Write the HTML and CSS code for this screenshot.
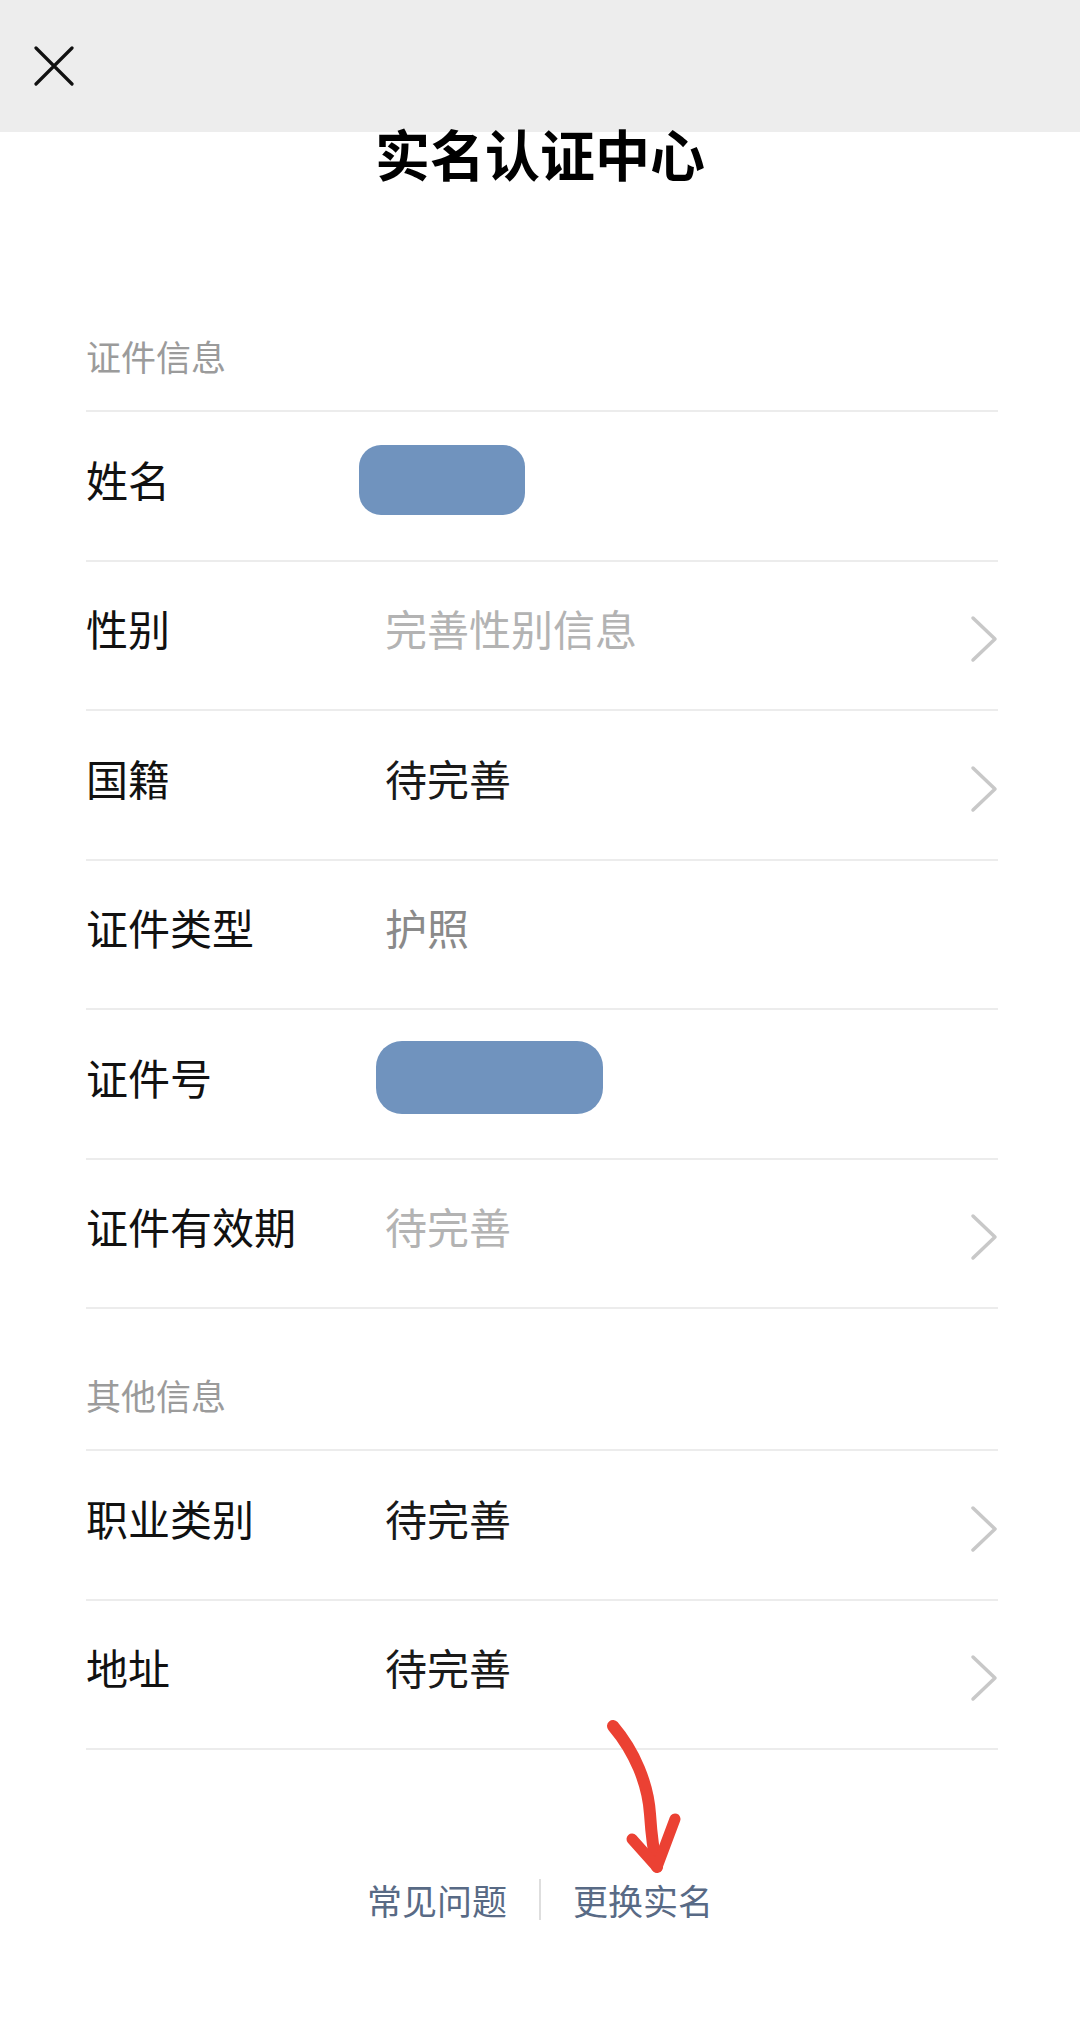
FILE: index.html
```html
<!DOCTYPE html>
<html lang="zh-CN">
<head>
    <meta charset="UTF-8">
    <meta name="viewport" content="width=device-width, initial-scale=1.0">
    <title>实名认证中心</title>
    <link rel="stylesheet" href="styles.css">
</head>
<body>
    <header class="topbar">
        <button class="close-btn" aria-label="关闭">
            <svg width="40" height="40" viewBox="0 0 40 40">
                <path d="M2 2 L38 38 M38 2 L2 38" stroke="#111" stroke-width="3.2" stroke-linecap="round" fill="none"/>
            </svg>
        </button>
    </header>

    <h1 class="title">实名认证中心</h1>

    <main class="info">
        <div class="section-label">证件信息</div>
        <div class="row">
            <span class="row-label">姓名</span>
            <span class="row-value"><span class="mask mask-name"></span></span>
        </div>
        <div class="row">
            <span class="row-label">性别</span>
            <span class="row-value placeholder">完善性别信息</span>
            <svg class="chevron" width="28" height="48" viewBox="0 0 28 48"><polyline points="3,3 25,24 3,45" /></svg>
        </div>
        <div class="row">
            <span class="row-label">国籍</span>
            <span class="row-value">待完善</span>
            <svg class="chevron" width="28" height="48" viewBox="0 0 28 48"><polyline points="3,3 25,24 3,45" /></svg>
        </div>
        <div class="row">
            <span class="row-label">证件类型</span>
            <span class="row-value muted">护照</span>
        </div>
        <div class="row">
            <span class="row-label">证件号</span>
            <span class="row-value"><span class="mask mask-id"></span></span>
        </div>
        <div class="row">
            <span class="row-label">证件有效期</span>
            <span class="row-value placeholder">待完善</span>
            <svg class="chevron" width="28" height="48" viewBox="0 0 28 48"><polyline points="3,3 25,24 3,45" /></svg>
        </div>

        <div class="section-label">其他信息</div>
        <div class="row">
            <span class="row-label">职业类别</span>
            <span class="row-value">待完善</span>
            <svg class="chevron" width="28" height="48" viewBox="0 0 28 48"><polyline points="3,3 25,24 3,45" /></svg>
        </div>
        <div class="row">
            <span class="row-label">地址</span>
            <span class="row-value">待完善</span>
            <svg class="chevron" width="28" height="48" viewBox="0 0 28 48"><polyline points="3,3 25,24 3,45" /></svg>
        </div>
    </main>

    <footer class="links">
        <a href="#">常见问题</a>
        <span class="sep"></span>
        <a href="#">更换实名</a>

        <!-- hand drawn annotation -->
        <svg class="annotation" width="110" height="190" viewBox="0 0 110 190">
            <path d="M23 22 C 45 48, 58 80, 60 110 S 64 150, 67 163" stroke-width="12"/>
            <path d="M42 135 L67 163 L85 115" stroke-width="11"/>
        </svg>
    </footer>
</body>
</html>
```

FILE: styles.css
```css
body {
    margin: 0;
    background: #fff;
    font-family: "Noto Sans CJK SC", "Noto Sans", sans-serif;
    color: #111;
}

.topbar {
    height: 132px;
    background: #ededed;
    display: flex;
    align-items: center;
    padding-left: 34px;
}

.close-btn {
    background: none;
    border: none;
    padding: 0;
    display: flex;
    cursor: pointer;
}

.title {
    margin: -2px 0 96px;
    text-align: center;
    font-size: 55px;
    font-weight: bold;
    line-height: 44px;
    color: #000;
}

.info {
    margin: 0 82px 0 86px;
}

.section-label {
    font-size: 35px;
    line-height: 35px;
    color: #9b9b9b;
    padding: 68px 0 37px;
    border-bottom: 2px solid #ececec;
}

.row {
    display: flex;
    align-items: center;
    box-sizing: border-box;
    height: 149.5px;
    padding-bottom: 14px;
    border-bottom: 2px solid #ececec;
    font-size: 42px;
    line-height: 42px;
}

.row-label {
    flex: none;
    width: 299px;
    color: #111;
}

.row-value {
    flex: 1;
    display: flex;
    align-items: center;
    color: #1a1a1a;
}

.row-value.placeholder {
    color: #b3b3b3;
}

.row-value.muted {
    color: #8a8a8a;
}

.mask {
    display: block;
    background: #7093be;
    margin-bottom: -2px;
}

.mask-name {
    width: 166px;
    height: 70px;
    border-radius: 22px;
    margin-left: -26px;
}

.mask-id {
    width: 227px;
    height: 73px;
    border-radius: 26px;
    margin-left: -9px;
}

.chevron {
    flex: none;
    margin-top: 22px;
}

.chevron polyline {
    fill: none;
    stroke: #c8c8c8;
    stroke-width: 3.5;
    stroke-linecap: round;
    stroke-linejoin: round;
}

.links {
    position: relative;
    display: flex;
    justify-content: center;
    align-items: center;
    padding-top: 129px;
    font-size: 35px;
    line-height: 35px;
}

.links a {
    color: #586a85;
    text-decoration: none;
}

.sep {
    width: 2px;
    height: 41px;
    margin: 0 32px;
    background: #dedede;
}

.annotation {
    position: absolute;
    left: 590px;
    top: -46px;
}

.annotation path {
    fill: none;
    stroke: #eb4133;
    stroke-linecap: round;
    stroke-linejoin: round;
}
```
